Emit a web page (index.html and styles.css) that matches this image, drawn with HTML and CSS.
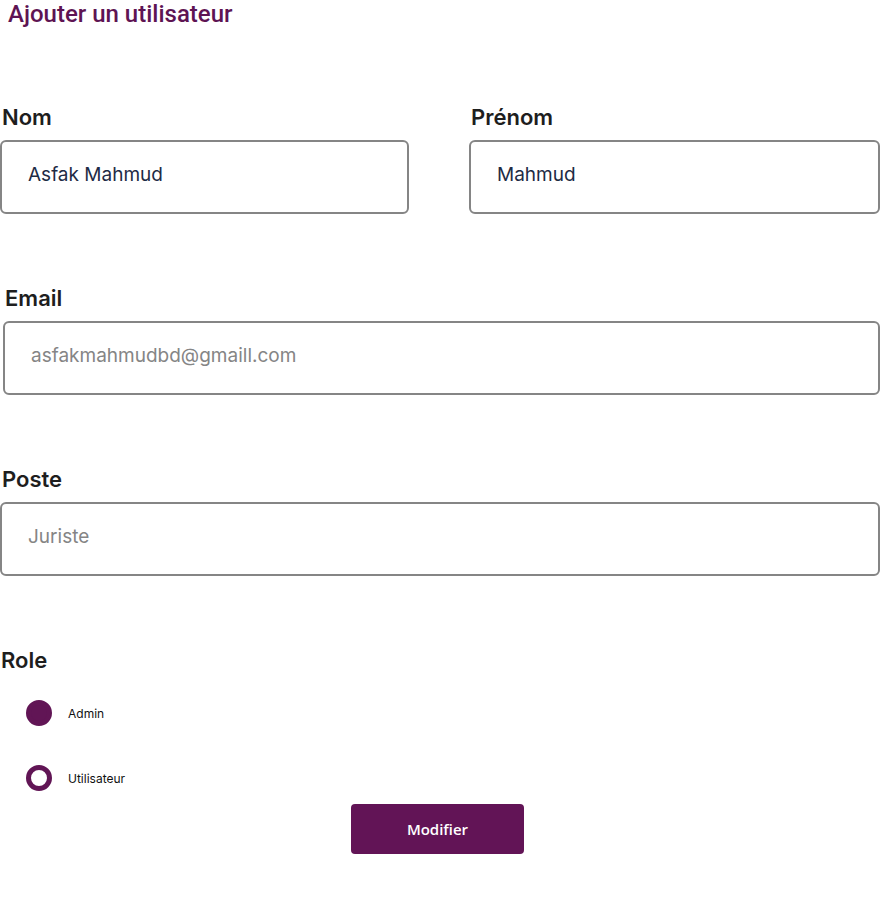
FILE: index.html
```html
<!DOCTYPE html>
<html lang="fr">
<head>
<meta charset="utf-8">
<title>Ajouter un utilisateur</title>
<link rel="stylesheet" href="styles.css">
</head>
<body>
<div class="page">
  <h1 class="title">Ajouter un utilisateur</h1>
  <form class="form">
    <div class="row two">
      <div class="field">
        <label class="label">Nom</label>
        <input class="input" type="text" value="Asfak Mahmud">
      </div>
      <div class="field">
        <label class="label">Prénom</label>
        <input class="input" type="text" value="Mahmud">
      </div>
    </div>
    <div class="row field email">
      <label class="label">Email</label>
      <input class="input" type="email" placeholder="asfakmahmudbd@gmaill.com">
    </div>
    <div class="row field">
      <label class="label">Poste</label>
      <input class="input" type="text" placeholder="Juriste">
    </div>
    <div class="row role">
      <div class="label">Role</div>
      <div class="radios">
        <div class="radio-row"><span class="radio checked"></span><span class="radio-label">Admin</span></div>
        <div class="radio-row"><span class="radio"></span><span class="radio-label">Utilisateur</span></div>
      </div>
    </div>
    <div class="actions">
      <button type="button" class="btn">Modifier</button>
    </div>
  </form>
</div>
</body>
</html>
```
FILE: styles.css
```css
* { box-sizing: border-box; }
html, body { margin: 0; padding: 0; background: #ffffff; }
body { width: 880px; font-family: Inter, "Noto Sans", sans-serif; }

.page { width: 880px; }

.title {
  margin: 0;
  padding-left: 8px;
  font-family: Roboto, "Liberation Sans", sans-serif;
  font-weight: 500;
  font-size: 24px;
  line-height: 28px;
  color: #5e1453;
}

.form { margin-top: 76px; }

.row { margin-bottom: 71px; }
.row.two {
  display: grid;
  grid-template-columns: 409px 1fr;
  column-gap: 60px;
}

.field { display: flex; flex-direction: column; }
.field.email { padding-left: 3px; }

.label {
  display: block;
  padding-left: 2px;
  font-family: Inter, sans-serif;
  font-weight: 600;
  font-size: 22px;
  line-height: 26px;
  color: #1e1e1e;
  margin-bottom: 10px;
}

.input {
  display: block;
  width: 100%;
  height: 74px;
  border: 2px solid #858585;
  border-radius: 6px;
  padding: 0 20px 6px 26px;
  font-family: Inter, sans-serif;
  font-size: 19px;
  color: #1e2b45;
  background: #fff;
  outline: none;
}
.input::placeholder { color: #858585; opacity: 1; }

.row.role { margin-bottom: 13px; }
.role .label { padding-left: 1px; margin-bottom: 27px; }

.radios { display: flex; flex-direction: column; gap: 39px; padding-left: 26px; }
.radio-row { display: flex; align-items: center; height: 26px; }
.radio {
  width: 26px;
  height: 26px;
  border-radius: 50%;
  border: 5px solid #611555;
  background: #fff;
  flex: none;
}
.radio.checked { background: #611555; }
.radio-label {
  margin-left: 16px;
  font-family: Inter, sans-serif;
  font-size: 12px;
  color: #111;
}

.actions { width: 875px; display: flex; justify-content: center; }
.btn {
  width: 173px;
  height: 50px;
  border: none;
  border-radius: 4px;
  background: #621456;
  color: #fff;
  font-family: "Open Sans", sans-serif;
  font-weight: 600;
  font-size: 15px;
}
```
